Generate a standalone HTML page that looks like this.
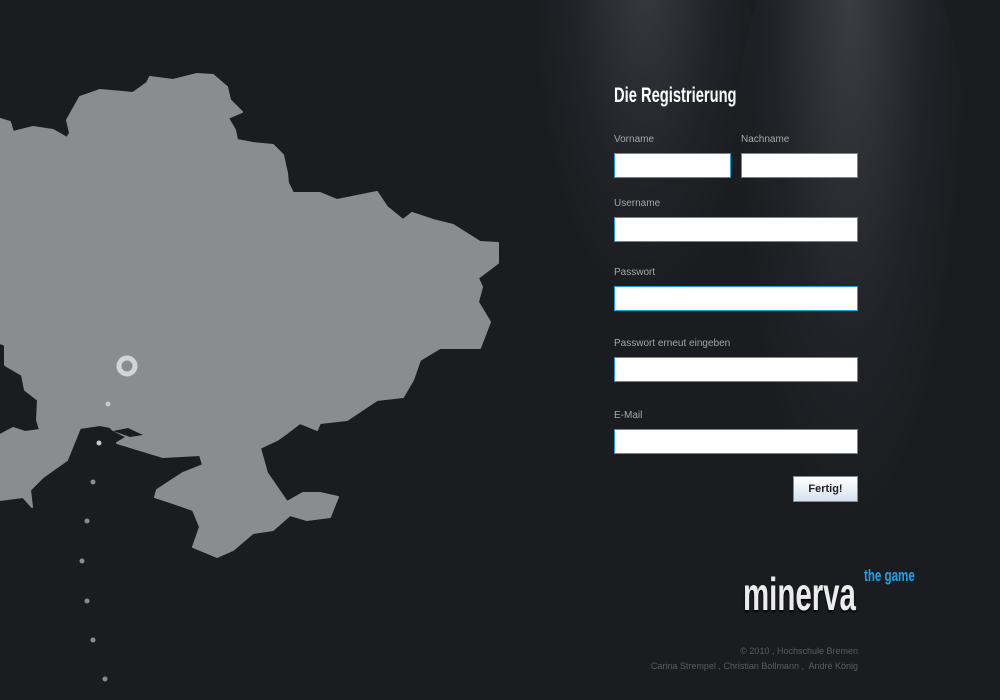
<!DOCTYPE html>
<html><head><meta charset="utf-8">
<style>
*{margin:0;padding:0;box-sizing:border-box}
body{width:1000px;height:700px;overflow:hidden;background:#1b1c20;font-family:"Liberation Sans",sans-serif;position:relative}
.spot{position:absolute;border-radius:50%;pointer-events:none}
.lbl{position:absolute;font-size:10px;color:#a6a6a6;left:614px}
.inp{position:absolute;background:#fff;border:1px solid #19a1e3;height:25px}
.abs{position:absolute}
.cond{font-family:"Liberation Sans",sans-serif;font-weight:bold;transform-origin:left top;white-space:nowrap}
</style></head><body>
<div class="spot" style="left:530px;top:-120px;width:230px;height:430px;background:radial-gradient(ellipse at 50% 20%,rgba(150,155,170,.24),rgba(90,95,110,.10) 45%,rgba(0,0,0,0) 70%)"></div>
<div class="spot" style="left:730px;top:-120px;width:240px;height:650px;background:radial-gradient(ellipse at 50% 18%,rgba(150,155,170,.26),rgba(90,95,110,.10) 45%,rgba(0,0,0,0) 70%)"></div>

<svg class="abs" style="left:0;top:0" width="520" height="700">
<path fill="#8b8c8e" stroke="#8b8c8e" stroke-width="2" stroke-linejoin="round" d="M0,119 L10,122 13,132 33,127 53,130 67,138 70,133 67,120 80,97 100,90 133,93 147,83 150,77 173,80 197,74 213,75 227,87 230,100 242,112 228,118 235,130 237,140 253,143 273,145 283,155 287,173 288,183 293,193 320,193 337,200 377,192 387,207 403,220 412,213 433,220 453,225 480,242 498,243 498,263 478,278 482,287 478,302 490,322 480,348 440,348 420,360 413,380 403,397 377,400 347,420 320,423 317,430 300,423 287,433 277,440 260,448 267,473 287,502 303,493 320,493 338,497 330,517 307,520 290,515 273,530 253,533 233,550 217,557 193,547 200,527 193,510 173,503 155,497 157,490 183,473 203,465 200,455 163,457 117,443 127,437 113,430 110,427 100,425 80,428 67,460 43,477 30,490 32,507 23,497 0,500 0,435 13,428 25,432 40,430 37,420 38,400 25,390 22,375 5,365 5,345 0,343 Z"/>
<path fill="#1b1c20" d="M113,431 L128,428 143,435 130,437 Z"/>
<circle cx="127" cy="366" r="8" fill="none" stroke="#d4d4d6" stroke-width="5"/>
<g fill="#c9c9cb"><circle cx="108" cy="404" r="2.5"/><circle cx="99" cy="443" r="2.5"/></g>
<g fill="#8b8c8e"><circle cx="93" cy="482" r="2.5"/><circle cx="87" cy="521" r="2.5"/><circle cx="82" cy="561" r="2.5"/><circle cx="87" cy="601" r="2.5"/><circle cx="93" cy="640" r="2.5"/><circle cx="105" cy="679" r="2.5"/></g>
</svg>

<div class="abs cond" style="left:614px;top:84px;font-size:21px;color:#fff;transform:scaleX(.7)">Die Registrierung</div>

<div class="lbl" style="top:134px">Vorname</div>
<div class="lbl" style="top:134px;left:741px">Nachname</div>
<div class="inp" style="left:614px;top:153px;width:117px"></div>
<div class="inp" style="left:741px;top:153px;width:117px"></div>
<div class="lbl" style="top:198px">Username</div>
<div class="inp" style="left:614px;top:217px;width:244px"></div>
<div class="lbl" style="top:267px">Passwort</div>
<div class="inp" style="left:614px;top:286px;width:244px"></div>
<div class="lbl" style="top:338px">Passwort erneut eingeben</div>
<div class="inp" style="left:614px;top:357px;width:244px"></div>
<div class="lbl" style="top:410px">E-Mail</div>
<div class="inp" style="left:614px;top:429px;width:244px"></div>

<div class="abs" style="left:793px;top:476px;width:65px;height:26px;border:1px solid #7d8ea0;background:linear-gradient(#fff,#d6e2ee);font-size:11px;font-weight:bold;color:#222;text-align:center;line-height:24px">Fertig!</div>

<div class="abs cond" style="left:743px;top:571px;font-size:46px;line-height:46px;color:#ececec;transform:scaleX(.64);text-shadow:0 2px 2px #000">minerva</div>
<div class="abs cond" style="left:864px;top:566px;font-size:17px;line-height:20px;color:#1aa3ea;transform:scaleX(.68)">the game</div>

<div class="abs" style="right:142px;top:644px;font-size:9px;color:#5b5c60;text-align:right;line-height:15px">© 2010 , Hochschule Bremen<br>Carina Strempel , Christian Bollmann ,&nbsp; André König</div>
</body></html>
